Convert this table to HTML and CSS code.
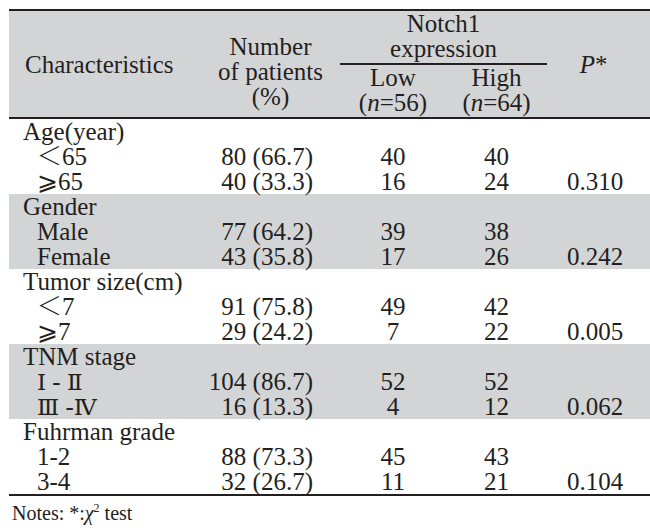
FILE: index.html
```html
<!DOCTYPE html>
<html lang="en">
<head>
<meta charset="utf-8">
<link rel="stylesheet" href="styles.css">
</head>
<body>
<table class="tbl">
  <colgroup>
    <col class="c1"><col class="c2"><col class="c3"><col class="c4"><col class="c5">
  </colgroup>
  <thead>
    <tr>
      <th rowspan="2" class="h-char">Characteristics</th>
      <th rowspan="2" class="h-num">Number<br>of patients<br>(%)</th>
      <th colspan="2" class="h-notch">Notch1<br>expression</th>
      <th rowspan="2" class="h-p"><i>P</i>*</th>
    </tr>
    <tr>
      <th class="h-sub">Low<br>(<i>n</i>=56)</th>
      <th class="h-sub">High<br>(<i>n</i>=64)</th>
    </tr>
  </thead>
  <tbody>
    <tr><td class="grp">Age(year)</td><td></td><td></td><td></td><td></td></tr>
    <tr><td class="sub"><span class="sym">＜</span>65</td><td class="num">80 (66.7)</td><td class="ctr">40</td><td class="ctr">40</td><td></td></tr>
    <tr><td class="sub"><span class="sym">⩾</span>65</td><td class="num">40 (33.3)</td><td class="ctr">16</td><td class="ctr">24</td><td class="pv">0.310</td></tr>
  </tbody>
  <tbody class="shade">
    <tr><td class="grp">Gender</td><td></td><td></td><td></td><td></td></tr>
    <tr><td class="sub">Male</td><td class="num">77 (64.2)</td><td class="ctr">39</td><td class="ctr">38</td><td></td></tr>
    <tr><td class="sub">Female</td><td class="num">43 (35.8)</td><td class="ctr">17</td><td class="ctr">26</td><td class="pv">0.242</td></tr>
  </tbody>
  <tbody>
    <tr><td class="grp">Tumor size(cm)</td><td></td><td></td><td></td><td></td></tr>
    <tr><td class="sub"><span class="sym">＜</span>7</td><td class="num">91 (75.8)</td><td class="ctr">49</td><td class="ctr">42</td><td></td></tr>
    <tr><td class="sub"><span class="sym">⩾</span>7</td><td class="num">29 (24.2)</td><td class="ctr">7</td><td class="ctr">22</td><td class="pv">0.005</td></tr>
  </tbody>
  <tbody class="shade">
    <tr><td class="grp">TNM stage</td><td></td><td></td><td></td><td></td></tr>
    <tr><td class="sub"><span class="rom">Ⅰ</span> - <span class="rom">Ⅱ</span></td><td class="num">104 (86.7)</td><td class="ctr">52</td><td class="ctr">52</td><td></td></tr>
    <tr><td class="sub"><span class="rom">Ⅲ</span> -<span class="rom">Ⅳ</span></td><td class="num">16 (13.3)</td><td class="ctr">4</td><td class="ctr">12</td><td class="pv">0.062</td></tr>
  </tbody>
  <tbody>
    <tr><td class="grp">Fuhrman grade</td><td></td><td></td><td></td><td></td></tr>
    <tr><td class="sub">1-2</td><td class="num">88 (73.3)</td><td class="ctr">45</td><td class="ctr">43</td><td></td></tr>
    <tr><td class="sub">3-4</td><td class="num">32 (26.7)</td><td class="ctr">11</td><td class="ctr">21</td><td class="pv">0.104</td></tr>
  </tbody>
</table>
<p class="notes">Notes: *:<i>χ</i><sup>2</sup> test</p>
</body>
</html>
```
FILE: styles.css
```css
html, body {
  margin: 0;
  padding: 0;
  background: #ffffff;
}
body {
  color: #231f20;
  font-family: "Liberation Serif", "Times New Roman", serif;
}
.tbl {
  margin: 9px 0 0 9px;
  width: 641px;
  border-collapse: separate;
  border-spacing: 0;
  table-layout: fixed;
  font-family: "Liberation Serif", "Times New Roman", serif;
  font-size: 25px;
  line-height: 25px;
  color: #231f20;
}
.c1 { width: 196px; }
.c2 { width: 135px; }
.c3 { width: 106px; }
.c4 { width: 101px; }
.c5 { width: 103px; }
.tbl th, .tbl td {
  padding: 0;
  font-weight: normal;
  white-space: nowrap;
}
.tbl tbody td { height: 25px; }
.sym {
  font-family: "Noto Sans CJK SC", "DejaVu Sans", sans-serif;
  font-weight: 300;
  line-height: 20px;
}
.rom {
  font-family: "DejaVu Serif", "Noto Sans CJK SC", serif;
  font-size: 23px;
  line-height: 20px;
}
.tbl thead th {
  background: #d3d4d6;
  vertical-align: middle;
}
.tbl thead tr:first-child th {
  border-top: 2px solid #231f20;
}
.h-char, .h-num, .h-p, .h-sub {
  border-bottom: 2px solid #231f20;
}
.h-char {
  text-align: left;
  padding-left: 16px !important;
}
.h-num {
  text-align: center;
  padding: 14px 4px 0 0 !important;
}
.h-notch {
  text-align: center;
  border-bottom: 2px solid #231f20;
  padding-bottom: 2px !important;
  vertical-align: top !important;
}
.h-sub {
  text-align: center;
  padding-bottom: 2px !important;
}
.h-p {
  text-align: center;
  padding-right: 10px !important;
}
.shade td { background: #d3d4d6; }
.grp { padding-left: 14px !important; }
.sub { padding-left: 28px !important; }
.num {
  text-align: right;
  padding-right: 27px !important;
}
.ctr { text-align: center; }
.pv {
  text-align: center;
  padding-right: 7px !important;
}
.notes {
  margin: 0 0 0 9px;
  width: 638px;
  padding: 5px 0 0 3px;
  border-top: 2px solid #231f20;
  font-size: 20px;
  line-height: 24px;
}
.notes sup {
  font-size: 12px;
  vertical-align: 8px;
  line-height: 0;
}
```
